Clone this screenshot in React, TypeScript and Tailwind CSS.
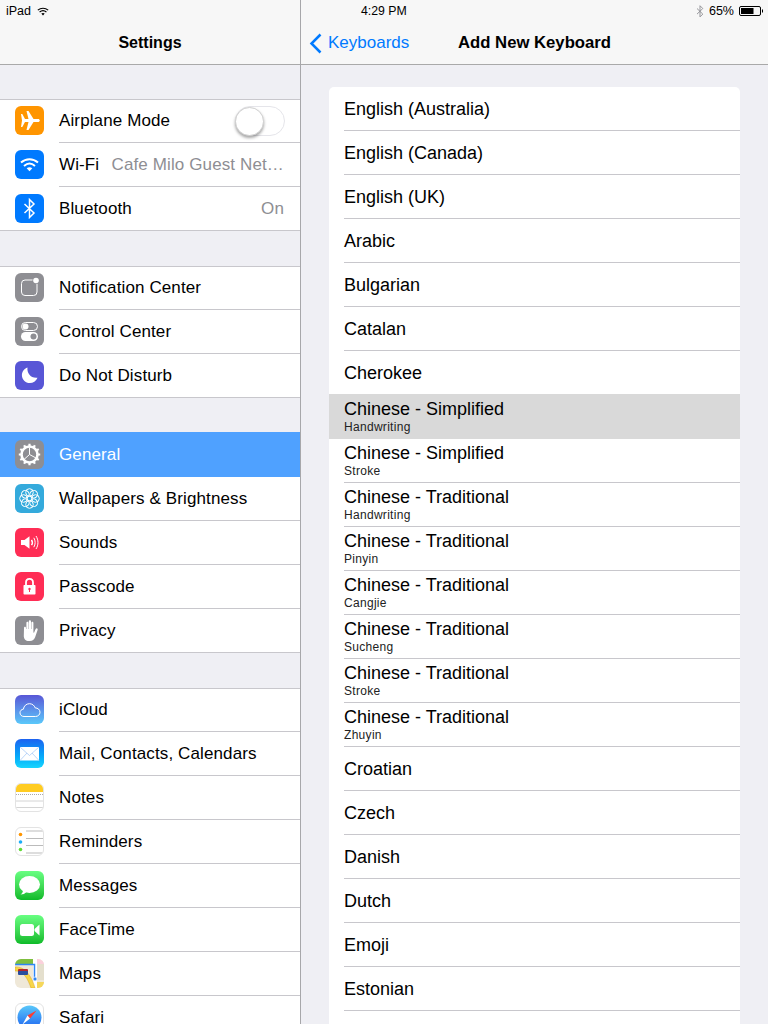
import type { ReactNode } from 'react';

const W = ({ children }: { children: ReactNode }) => (
  <svg viewBox="0 0 29 29" className="w-[29px] h-[29px] block">{children}</svg>
);

const Tile = ({ className, children }: { className: string; children: ReactNode }) => (
  <div className={`w-[29px] h-[29px] rounded-[6px] overflow-hidden shrink-0 ${className}`}>
    <W>{children}</W>
  </div>
);

const petals = [0, 45, 90, 135, 180, 225, 270, 315];
const teeth = [0, 30, 60, 90, 120, 150, 180, 210, 240, 270, 300, 330];

const icons: Record<string, ReactNode> = {
  airplane: (
    <Tile className="bg-[#ff9500]">
      <path d="M6 8h1.300l2.700 5h3.500L11.500 5h2l5 8h4.500c1 0 1.800.7 1.800 1.500S24 16 23 16h-4.500l-5 8h-2l2-8H10l-2.700 5H6l1-6.500z" fill="#fff" />
    </Tile>
  ),
  wifi: (
    <Tile className="bg-[#007aff]">
      <g fill="none" stroke="#fff" strokeWidth="2" strokeLinecap="butt">
        <path d="M6 12.600c5-4.400 12-4.400 17 0" />
        <path d="M9 15.900c3.400-3 7.600-3 11 0" />
      </g>
      <path d="M11.700 18.300c1.700-1.300 3.900-1.300 5.600 0l-2.800 2.900z" fill="#fff" />
    </Tile>
  ),
  bluetooth: (
    <Tile className="bg-[#007aff]">
      <path d="M9.500 10l9.500 9-4.500 4.500v-18l4.500 4.500-9.500 9" fill="none" stroke="#fff" strokeWidth="1.500" />
    </Tile>
  ),
  notification: (
    <Tile className="bg-[#8e8e93]">
      <rect x="6.500" y="7" width="15.500" height="15.500" rx="3.500" fill="none" stroke="#fff" strokeWidth="1" />
      <circle cx="21" cy="7.500" r="3.500" fill="#8e8e93" />
      <circle cx="21" cy="7.500" r="2.800" fill="#fff" />
    </Tile>
  ),
  control: (
    <Tile className="bg-[#8e8e93]">
      <rect x="6.500" y="5.500" width="16" height="8" rx="4" fill="none" stroke="#fff" strokeWidth="1" />
      <circle cx="10.500" cy="9.500" r="3" fill="#fff" />
      <rect x="6" y="15" width="17" height="9" rx="4.500" fill="#fff" />
      <circle cx="18.500" cy="19.500" r="3" fill="#8e8e93" />
    </Tile>
  ),
  moon: (
    <Tile className="bg-[#5856d6]">
      <path d="M12.500 6.500c-.8 5.500 3.200 11 10 10.200-1.400 3.400-4.400 5.300-7.600 5.300-4.500 0-8-3.500-8-7.800 0-3.500 2.200-6.500 5.600-7.700z" fill="#fff" />
    </Tile>
  ),
  gear: (
    <Tile className="bg-[#8e8e93]">
      <g stroke="#fff" fill="none">
        <circle cx="14.500" cy="14.500" r="8" strokeWidth="2.600" />
        {teeth.map((a) => (
          <path key={a} d="M14.500 3.800v3" strokeWidth="2.200" transform={`rotate(${a} 14.500 14.500)`} />
        ))}
        <path d="M14.500 14.500V7.500M14.500 14.500l6.500 3.500M14.500 14.500l-5.500 5" strokeWidth="1" />
      </g>
    </Tile>
  ),
  flower: (
    <Tile className="bg-[#34aadc]">
      <g fill="none" stroke="#fff" strokeWidth="1">
        {petals.map((a) => (
          <circle key={a} cx="14.500" cy="8.500" r="3.800" transform={`rotate(${a} 14.500 14.500)`} />
        ))}
        <circle cx="14.500" cy="14.500" r="2.500" />
      </g>
    </Tile>
  ),
  sounds: (
    <Tile className="bg-[#ff2d55]">
      <path d="M6 12h3.500l5-3.800v12.600l-5-3.800H6z" fill="#fff" />
      <g fill="none" stroke="#fff" strokeWidth="1">
        <path d="M16.500 11.800c1 1.600 1 3.800 0 5.400" strokeWidth="1.500" />
        <path d="M18.800 9.800c1.800 2.800 1.800 6.600 0 9.400" />
        <path d="M21 8c2.600 4 2.600 9 0 13" />
      </g>
    </Tile>
  ),
  lock: (
    <Tile className="bg-[#ff2d55]">
      <path d="M11 13.500v-3c0-2.200 1.500-3.700 3.500-3.700s3.500 1.500 3.500 3.700v3" fill="none" stroke="#fff" strokeWidth="1.800" />
      <rect x="8.500" y="13" width="12" height="9.500" rx=".8" fill="#fff" />
      <circle cx="14.500" cy="17" r="1.200" fill="#ff2d55" />
      <path d="M14 17.500h1v2.500h-1z" fill="#ff2d55" />
    </Tile>
  ),
  hand: (
    <Tile className="bg-[#8e8e93]">
      <path d="M9 12c0-1.800 2-1.800 2 0v1h.4V7c0-1.800 2-1.800 2 0v6h.4V5.500c0-1.800 2.200-1.800 2.200 0V13h.4V7c0-1.800 2-1.800 2 0v9.500l.6.200 1.500-3.400c.8-1.700 2.700-.9 2.100.8l-2.500 7.200c-.8 2.200-2.600 3.700-5.200 3.700h-1.100c-3 0-5-2-5-5z" fill="#fff" />
    </Tile>
  ),
  cloud: (
    <Tile className="bg-linear-to-b from-[#5856d6] to-[#5ac8fa]">
      <path d="M9 21.500c-2.500 0-4-1.700-4-3.700 0-2 1.500-3.500 3.400-3.600.4-3.300 3-5.500 6-5.500 2.800 0 5 1.700 5.800 4.200 2.500 0 4.800 1.700 4.800 4.300 0 2.500-2 4.300-4.500 4.300z" fill="none" stroke="#fff" strokeWidth="1" />
    </Tile>
  ),
  mail: (
    <Tile className="bg-linear-to-b from-[#1d62f0] to-[#19d5fd]">
      <rect x="5" y="8" width="19" height="13.500" fill="#fff" />
      <path d="M5 8l9.500 8.500L24 8M5 21.500l7-7.500M24 21.500l-7-7.500" fill="none" stroke="#9fc4f5" strokeWidth=".7" />
    </Tile>
  ),
  notes: (
    <Tile className="bg-white border border-[#e3e3e3]">
      <rect x="-1" y="-1" width="31" height="9" fill="#ffcc22" />
      <path d="M0 10.500h29" stroke="#aaa" strokeWidth="1" strokeDasharray="1 1" />
      <path d="M0 17h29M0 23.500h29" stroke="#d4d4d4" strokeWidth="1" />
    </Tile>
  ),
  reminders: (
    <Tile className="bg-white border border-[#e3e3e3]">
      <circle cx="4.500" cy="6.500" r="1.800" fill="#ff9500" />
      <circle cx="4.500" cy="14" r="1.800" fill="#1badf8" />
      <circle cx="4.500" cy="21.500" r="1.800" fill="#63da38" />
      <path d="M10 3h19M10 10.500h19M10 17.500h19M10 25h19" stroke="#bbb" strokeWidth="1" />
    </Tile>
  ),
  messages: (
    <Tile className="bg-linear-to-b from-[#67ff81] to-[#0bbb28]">
      <ellipse cx="14.500" cy="13.500" rx="10.500" ry="8.500" fill="#fff" />
      <path d="M8 19c0 2-1 3.500-2.500 4.500 2.500 0 4.500-.8 6-2.500z" fill="#fff" />
    </Tile>
  ),
  facetime: (
    <Tile className="bg-linear-to-b from-[#67ff81] to-[#0bbb28]">
      <rect x="5" y="9" width="14" height="12" rx="2.500" fill="#fff" />
      <path d="M19.500 14l5-4.500v11l-5-4.500z" fill="#fff" />
    </Tile>
  ),
  maps: (
    <Tile className="bg-[#efe8d8]">
      <rect x="0" y="0" width="18" height="5" fill="#7fbf3f" />
      <rect x="22" y="0" width="7" height="5" fill="#fbd0dc" />
      <rect x="22" y="5" width="7" height="16" fill="#e4dfcd" />
      <rect x="18" y="0" width="4" height="29" fill="#fff" />
      <path d="M0 5.500h19.500V19" fill="none" stroke="#2f86f5" strokeWidth="1.500" />
      <path d="M0 12c8-1 13 8 16 17h4C17 18 10 7 0 8z" fill="#f7d64a" stroke="#d9a520" strokeWidth=".5" />
      <rect x="3" y="10" width="10" height="5" rx="1" fill="#b3262e" />
      <rect x="3" y="12" width="10" height="4" rx="1" fill="#2b4f9e" />
      <circle cx="20" cy="20" r="2" fill="#2f86f5" stroke="#fff" strokeWidth=".7" />
      <rect x="22" y="23" width="7" height="6" fill="#f5d75a" />
    </Tile>
  ),
  safari: (
    <Tile className="bg-white border border-[#e3e3e3]">
      <defs>
        <linearGradient id="safariDisc" x1="0" y1="0" x2="0" y2="1">
          <stop offset="0" stopColor="#5ac8fa" />
          <stop offset="1" stopColor="#1d62f0" />
        </linearGradient>
      </defs>
      <circle cx="13.500" cy="13.500" r="12" fill="url(#safariDisc)" />
      <path d="M20.500 6.500l-9 5 2.500 3z" fill="#ff3b30" />
      <path d="M6.500 20.500l5-9 2.500 3z" fill="#fff" />
    </Tile>
  ),
};

type Item = { icon: string; label: string; value?: string; toggle?: boolean; selected?: boolean };

const groups: Item[][] = [
  [
    { icon: 'airplane', label: 'Airplane Mode', toggle: true },
    { icon: 'wifi', label: 'Wi-Fi', value: 'Cafe Milo Guest Net…' },
    { icon: 'bluetooth', label: 'Bluetooth', value: 'On' },
  ],
  [
    { icon: 'notification', label: 'Notification Center' },
    { icon: 'control', label: 'Control Center' },
    { icon: 'moon', label: 'Do Not Disturb' },
  ],
  [
    { icon: 'gear', label: 'General', selected: true },
    { icon: 'flower', label: 'Wallpapers & Brightness' },
    { icon: 'sounds', label: 'Sounds' },
    { icon: 'lock', label: 'Passcode' },
    { icon: 'hand', label: 'Privacy' },
  ],
  [
    { icon: 'cloud', label: 'iCloud' },
    { icon: 'mail', label: 'Mail, Contacts, Calendars' },
    { icon: 'notes', label: 'Notes' },
    { icon: 'reminders', label: 'Reminders' },
    { icon: 'messages', label: 'Messages' },
    { icon: 'facetime', label: 'FaceTime' },
    { icon: 'maps', label: 'Maps' },
    { icon: 'safari', label: 'Safari' },
  ],
];

const keyboards: { name: string; sub?: string; selected?: boolean }[] = [
  { name: 'English (Australia)' },
  { name: 'English (Canada)' },
  { name: 'English (UK)' },
  { name: 'Arabic' },
  { name: 'Bulgarian' },
  { name: 'Catalan' },
  { name: 'Cherokee' },
  { name: 'Chinese - Simplified', sub: 'Handwriting', selected: true },
  { name: 'Chinese - Simplified', sub: 'Stroke' },
  { name: 'Chinese - Traditional', sub: 'Handwriting' },
  { name: 'Chinese - Traditional', sub: 'Pinyin' },
  { name: 'Chinese - Traditional', sub: 'Cangjie' },
  { name: 'Chinese - Traditional', sub: 'Sucheng' },
  { name: 'Chinese - Traditional', sub: 'Stroke' },
  { name: 'Chinese - Traditional', sub: 'Zhuyin' },
  { name: 'Croatian' },
  { name: 'Czech' },
  { name: 'Danish' },
  { name: 'Dutch' },
  { name: 'Emoji' },
  { name: 'Estonian' },
];

function SettingsRow({ item, last }: { item: Item; last: boolean }) {
  if (item.selected) {
    return (
      <div className="h-[45px] bg-[#4fa1ff] flex pl-[15px] pt-[8px] relative">
        {icons[item.icon]}
        <span className="ml-[15px] mt-[4px] text-[17px] tracking-[0.12px] leading-[22px] text-white">{item.label}</span>
      </div>
    );
  }
  return (
    <div className={`flex pl-[15px] pt-[7px] ${last ? 'h-[43px]' : 'h-[44px]'}`}>
      {icons[item.icon]}
      <div className={`ml-[15px] -mt-[7px] flex-1 min-w-0 flex items-center pr-[16px] ${last ? 'h-[43px]' : 'h-[44px] border-b border-[#c8c7cc]'}`}>
        <span className="text-[17px] tracking-[0.12px] leading-[22px] text-black whitespace-nowrap">{item.label}</span>
        {item.value && <span className="ml-auto text-[17px] tracking-[0.12px] leading-[22px] text-[#8e8e93] whitespace-nowrap">{item.value}</span>}
        {item.toggle && (
          <div className="ml-auto -mr-px w-[50px] h-[30px] rounded-full border border-[#e5e5ea] bg-white relative">
            <div className="absolute -left-px top-0 w-[29px] h-[29px] rounded-full bg-white border border-[#d0d0d0] shadow-[0_2px_3px_rgba(0,0,0,0.35)]" />
          </div>
        )}
      </div>
    </div>
  );
}

function KeyboardRow({ row }: { row: (typeof keyboards)[number] }) {
  const text = (
    <div className="flex flex-col justify-center">
      <span className={`text-[18px] text-black ${row.sub ? 'leading-[20px]' : 'leading-[22px]'}`}>{row.name}</span>
      {row.sub && <span className="text-[12px] leading-[16px] text-[#222] tracking-[0.3px]">{row.sub}</span>}
    </div>
  );
  if (row.selected) {
    return <div className="relative -mt-px h-[45px] bg-[#d9d9d9] pl-[15px] flex items-center">{text}</div>;
  }
  return (
    <div className="h-[44px] pl-[15px]">
      <div className="h-[44px] flex items-center border-b border-[#c8c7cc]">{text}</div>
    </div>
  );
}

export default function App() {
  return (
    <div className="w-[768px] h-[1024px] overflow-hidden flex bg-[#efeff4] font-['Liberation_Sans',Arial,sans-serif]">
      {/* Settings sidebar */}
      <aside className="w-[301px] shrink-0 border-r border-[#a7a7aa] h-full overflow-hidden">
        <div className="h-[65px] bg-[#f7f7f7] border-b border-[#a9a9a9]">
          <div className="h-[22px] flex items-center pl-[6px] gap-[6px]">
            <span className="text-[12.500px] text-black">iPad</span>
            <svg viewBox="0 0 12 9" className="w-[12px] h-[9px]">
              <path d="M.8 3.200c3-2.600 7.400-2.600 10.400 0M2.600 5c2-1.700 4.800-1.700 6.800 0" fill="none" stroke="#000" strokeWidth="1.100" />
              <path d="M4.300 6.500c1-.7 2.400-.7 3.400 0L6 8.400z" fill="#000" />
            </svg>
          </div>
          <div className="h-[42px] flex items-center justify-center text-[16px] font-bold text-black">Settings</div>
        </div>
        <div className="pt-[34px] flex flex-col">
          {groups.map((group, i) => (
            <div key={i} className={`bg-white border-y border-[#c8c7cc] ${i === 2 ? 'mt-[34px]' : i > 0 ? 'mt-[35px]' : ''}`}>
              <div className="-mt-px">
                {group.map((item, j) => (
                  <SettingsRow key={item.label} item={item} last={j === group.length - 1} />
                ))}
              </div>
            </div>
          ))}
        </div>
      </aside>

      {/* Keyboard picker */}
      <main className="flex-1 min-w-0 h-full overflow-hidden">
        <div className="h-[65px] bg-[#f7f7f7] border-b border-[#a9a9a9]">
          <div className="h-[22px] flex items-center pl-[60px] pr-[4px]">
            <span className="text-[12.300px] text-black">4:29 PM</span>
            <svg viewBox="0 0 8 14" className="ml-auto w-[8px] h-[13px]">
              <path d="M.8 3.800l6.200 6-3 3v-12l3 3-6.200 6" fill="none" stroke="#8e8e93" strokeWidth="1" />
            </svg>
            <span className="ml-[5px] text-[12.500px] text-black">65%</span>
            <svg viewBox="0 0 25 10" className="ml-[5px] w-[25px] h-[10px]">
              <rect x=".5" y=".5" width="21" height="9" rx="1.500" fill="none" stroke="#000" strokeWidth="1" />
              <rect x="2" y="2" width="12.500" height="6" fill="#000" />
              <path d="M23 3.500h1v3h-1z" fill="#000" />
            </svg>
          </div>
          <div className="h-[42px] grid grid-cols-[1fr_auto_1fr] items-center">
            <div className="flex items-center pl-[8px] text-[#007aff]">
              <svg viewBox="0 0 13 21" className="w-[13px] h-[21px]">
                <path d="M11.500 1.500l-9 9 9 9" fill="none" stroke="#007aff" strokeWidth="2.500" />
              </svg>
              <span className="ml-[6px] text-[17px]">Keyboards</span>
            </div>
            <div className="text-[16.700px] font-bold text-black">Add New Keyboard</div>
            <div />
          </div>
        </div>
        <div className="pt-[22px] pl-[28px] pr-[28px]">
          <div className="bg-white rounded-t-[5px] overflow-hidden pb-[20px]">
            {keyboards.map((row) => (
              <KeyboardRow key={row.name + (row.sub ?? '')} row={row} />
            ))}
          </div>
        </div>
      </main>
    </div>
  );
}
